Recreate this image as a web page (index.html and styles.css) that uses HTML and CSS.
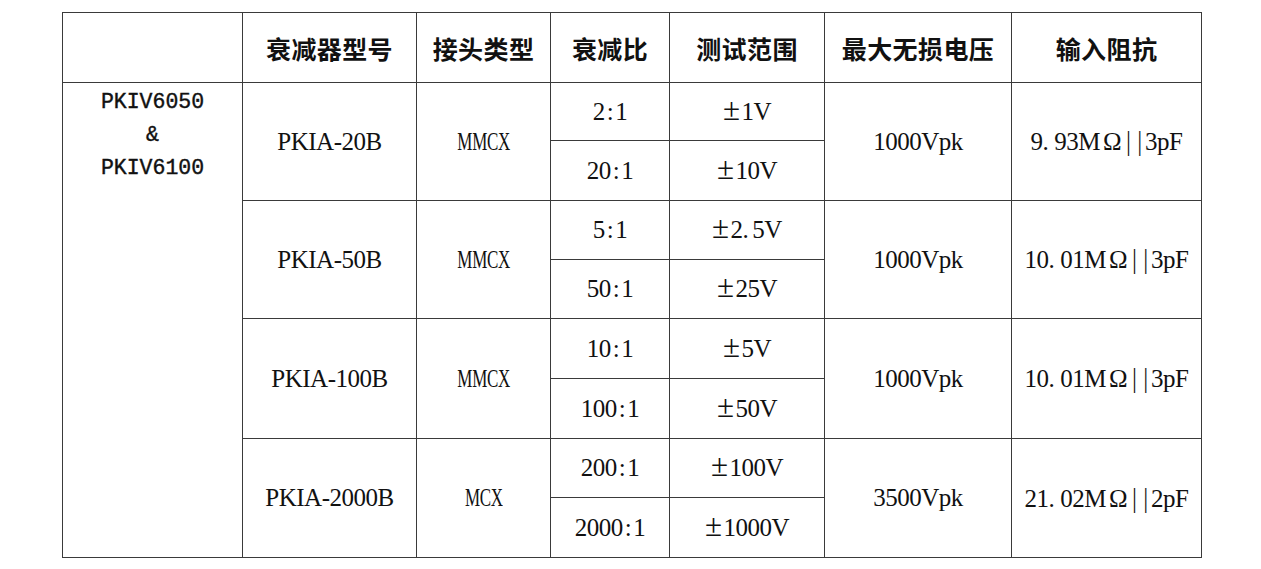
FILE: index.html
```html
<!DOCTYPE html>
<html lang="zh">
<head>
<meta charset="utf-8">
<title>衰减器型号</title>
<link rel="stylesheet" href="styles.css">
</head>
<body>
<table class="spec">
  <colgroup>
    <col class="c1"><col class="c2"><col class="c3"><col class="c4"><col class="c5"><col class="c6"><col class="c7">
  </colgroup>
  <thead>
    <tr class="head">
      <th></th>
      <th>衰减器型号</th>
      <th>接头类型</th>
      <th>衰减比</th>
      <th>测试范围</th>
      <th>最大无损电压</th>
      <th>输入阻抗</th>
    </tr>
  </thead>
  <tbody>
    <tr class="r58">
      <td rowspan="8" class="model">PKIV6050<br>&amp;<br>PKIV6100</td>
      <td rowspan="2">PKIA-20B</td>
      <td rowspan="2"><span class="cond">MMCX</span></td>
      <td>2<span class="col">:</span>1</td>
      <td><span class="pm">±</span>1V</td>
      <td rowspan="2">1000Vpk</td>
      <td rowspan="2">9<span class="dot">.</span>93M<span class="om">Ω</span><span class="bars">||</span>3pF</td>
    </tr>
    <tr class="r60">
      <td>20<span class="col">:</span>1</td>
      <td><span class="pm">±</span>10V</td>
    </tr>
    <tr class="r59">
      <td rowspan="2">PKIA-50B</td>
      <td rowspan="2"><span class="cond">MMCX</span></td>
      <td>5<span class="col">:</span>1</td>
      <td><span class="pm">±</span>2<span class="dot2">.</span>5V</td>
      <td rowspan="2">1000Vpk</td>
      <td rowspan="2">10<span class="dot">.</span>01M<span class="om">Ω</span><span class="bars">||</span>3pF</td>
    </tr>
    <tr class="r59">
      <td>50<span class="col">:</span>1</td>
      <td><span class="pm">±</span>25V</td>
    </tr>
    <tr class="r60">
      <td rowspan="2">PKIA-100B</td>
      <td rowspan="2"><span class="cond">MMCX</span></td>
      <td>10<span class="col">:</span>1</td>
      <td><span class="pm">±</span>5V</td>
      <td rowspan="2">1000Vpk</td>
      <td rowspan="2">10<span class="dot">.</span>01M<span class="om">Ω</span><span class="bars">||</span>3pF</td>
    </tr>
    <tr class="r60">
      <td>100<span class="col">:</span>1</td>
      <td><span class="pm">±</span>50V</td>
    </tr>
    <tr class="r59">
      <td rowspan="2">PKIA-2000B</td>
      <td rowspan="2"><span class="cond">MCX</span></td>
      <td>200<span class="col">:</span>1</td>
      <td><span class="pm">±</span>100V</td>
      <td rowspan="2">3500Vpk</td>
      <td rowspan="2">21<span class="dot">.</span>02M<span class="om">Ω</span><span class="bars">||</span>2pF</td>
    </tr>
    <tr class="r60">
      <td>2000<span class="col">:</span>1</td>
      <td><span class="pm">±</span>1000V</td>
    </tr>
  </tbody>
</table>
</body>
</html>
```
FILE: styles.css
```css
html, body {
  margin: 0;
  padding: 0;
  background: #ffffff;
}
body {
  padding: 12px 0 0 62px;
}
.spec {
  border-collapse: collapse;
  table-layout: fixed;
  width: 1140px;
  border: 1px solid #3a3a3a;
  color: #111;
}
.c1 { width: 180px; }
.c2 { width: 174px; }
.c3 { width: 134px; }
.c4 { width: 119px; }
.c5 { width: 155px; }
.c6 { width: 187px; }
.c7 { width: 190px; }
.spec th,
.spec td {
  border: 1px solid #3a3a3a;
  padding: 0;
  text-align: center;
  vertical-align: middle;
}
.spec th {
  font-family: "Noto Sans CJK SC", "Noto Sans", sans-serif;
  font-weight: 700;
  font-size: 25px;
  letter-spacing: 0.4px;
  color: #111;
}
.head { height: 70px; }
.r58 { height: 58px; }
.r59 { height: 59px; }
.r60 { height: 60px; }
.spec td {
  font-family: "Liberation Serif", "Noto Sans CJK SC", serif;
  font-size: 25px;
  letter-spacing: -0.5px;
  white-space: nowrap;
}
.spec td.model {
  vertical-align: top;
  padding-top: 3px;
  font-family: "Liberation Mono", monospace;
  font-weight: normal;
  font-size: 21.5px;
  line-height: 33px;
  letter-spacing: 0;
  -webkit-text-stroke: 0.4px #111;
}
.cond {
  display: inline-block;
  transform: scaleX(0.68);
}
.col { margin: 0 2px; }
.pm {
  font-size: 31px;
  line-height: 0;
  margin-right: 2px;
}
.dot { margin-right: 6px; }
.dot2 { margin-right: 4px; }
.om { margin: 0 2px 0 3px; }
.bars {
  font-family: "DejaVu Sans", sans-serif;
  font-weight: 200;
  font-size: 25px;
  letter-spacing: 3px;
  margin-left: 1px;
  margin-right: -2px;
}
```
